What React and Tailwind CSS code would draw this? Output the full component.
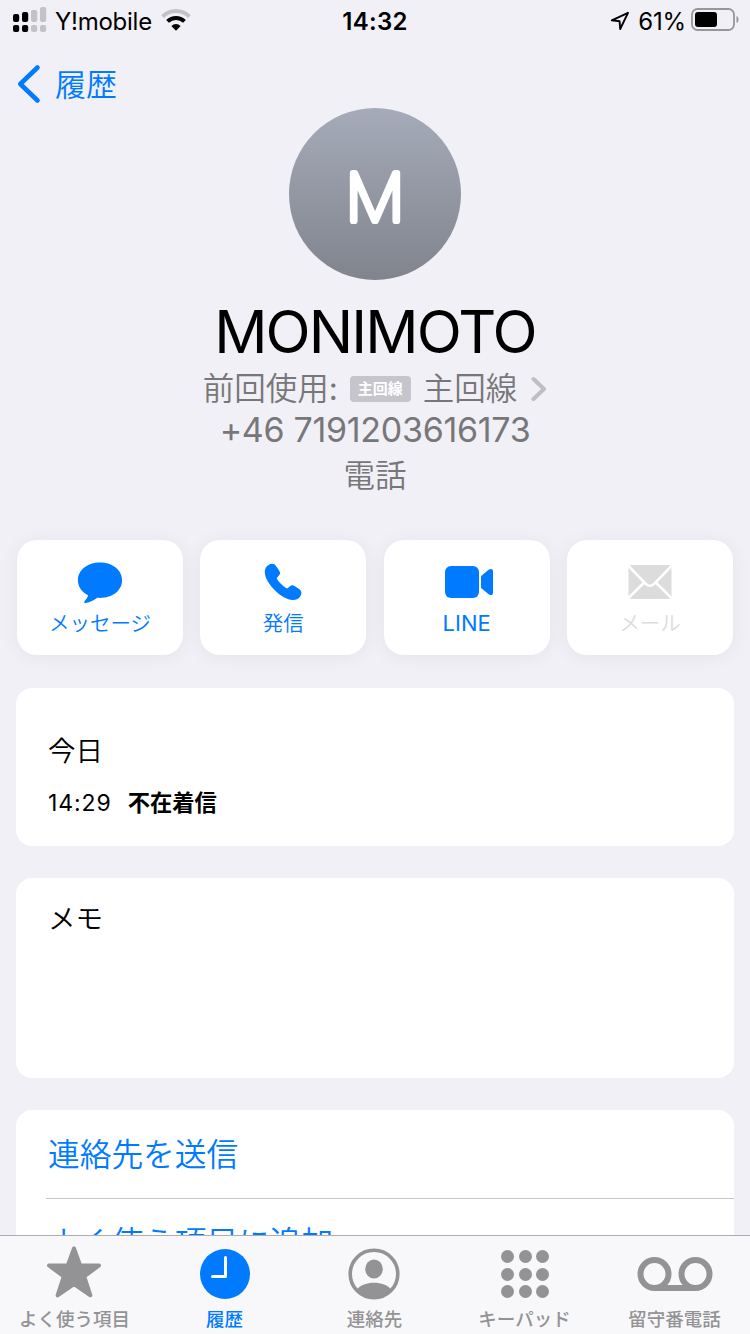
import React from 'react';


const BackChevron = () => (
  <svg width="24" height="40" viewBox="0 0 24 40" fill="none">
    <path d="M20.500 3.500 3.300 20l17.200 16.500" stroke="#007aff" strokeWidth="4.600" strokeLinecap="round" strokeLinejoin="round" />
  </svg>
);

const SignalIcon = () => (
  <svg width="34" height="26" viewBox="0 0 34 26">
    <g fill="#000">
      <rect x="0" y="7" width="6.2" height="8" rx="2" />
      <rect x="0" y="18" width="6.2" height="7" rx="2" />
      <rect x="9" y="5" width="6.2" height="10" rx="2" />
      <rect x="9" y="18" width="6.2" height="7" rx="2" />
    </g>
    <g fill="#c3c2c8">
      <rect x="18" y="3" width="6.2" height="12" rx="2" />
      <rect x="18" y="18" width="6.2" height="7" rx="2" />
      <rect x="27" y="0" width="6.2" height="15" rx="2" />
      <rect x="27" y="18" width="6.2" height="7" rx="2" />
    </g>
  </svg>
);

const WifiIcon = () => (
  <svg width="30" height="22" viewBox="0 0 30 22" fill="none">
    <path d="M1.600 7.600a19 19 0 0 1 26.800 0" stroke="#c3c2c8" strokeWidth="4" />
    <path d="M6.600 12.400a12 12 0 0 1 16.800 0" stroke="#000" strokeWidth="4" />
    <path d="M10.400 17a6.400 6.400 0 0 1 9.200 0L15 21.800Z" fill="#000" />
  </svg>
);

const LocationIcon = () => (
  <svg width="20" height="20" viewBox="0 0 20 20" fill="none">
    <path d="M18 1.800 1.800 9.300l7.800.9.600 7.800Z" stroke="#000" strokeWidth="1.900" strokeLinejoin="round" />
  </svg>
);

const BatteryIcon = () => (
  <svg width="49" height="24" viewBox="0 0 49 24">
    <rect x="1" y="1" width="42" height="21" rx="5.500" fill="none" stroke="#97969a" strokeWidth="1.800" />
    <rect x="4" y="4" width="22" height="15" rx="3" fill="#000" />
    <path d="M45.500 8v7c1.400-.6 2-1.900 2-3.500s-.6-2.900-2-3.500Z" fill="#97969a" />
  </svg>
);

const MessageIcon = () => (
  <svg width="46" height="42" viewBox="0 0 46 42" fill="#007aff">
    <path d="M23 .5C10.500.5.900 8.100.900 18.200c0 6.300 3.800 11.800 10.200 15-.6 2.300-2 4.100-3.600 6-.7.9-.1 1.900 1 1.800 4.800-.5 8.500-2.700 11.800-5.200.9.100 1.800.1 2.700.1 12.500 0 22.100-7.600 22.100-17.700S35.500.5 23 .5Z" />
  </svg>
);

const PhoneIcon = () => (
  <svg className="mb-px" width="38" height="38" viewBox="0 0 38 38" fill="#007aff">
    <path d="M4.200 2.200C7.100.100 10.200.400 12 2.900l3.100 4.500c1.400 2.100 1.200 3.600-.2 5.200l-1.700 1.800c-.5.6-.5 1.200-.1 1.900 1 1.600 2.400 3.200 4 4.800 1.600 1.600 3.200 3 4.900 4 .7.400 1.300.4 1.900-.1l1.800-1.600c1.600-1.400 3.100-1.600 5.200-.2l4.500 3.100c2.400 1.700 2.700 4.500.6 7.400-1.700 2.300-4.200 3.400-7.200 3.300-5.700-.2-12.300-4.100-18-9.800C5.100 21.500 1 14.900.8 9.200.7 6.200 1.900 3.800 4.200 2.200Z" />
  </svg>
);

const VideoIcon = () => (
  <svg className="mb-[2px] ml-[4px]" width="50" height="34" viewBox="0 0 50 34" fill="#007aff">
    <rect x="1" y="1" width="34" height="32" rx="6" />
    <path d="M37 12.500c0-1.100.4-1.900 1.300-2.600l6.700-5.300c1.900-1.400 4-.6 4 1.700v21.400c0 2.300-2.100 3.100-4 1.700l-6.700-5.300c-.9-.7-1.300-1.500-1.300-2.600Z" />
  </svg>
);

const MailIcon = () => (
  <svg className="mb-[2px]" width="44" height="34" viewBox="0 0 44 34">
    <rect x=".5" y="0" width="43" height="34" rx="3.500" fill="#dcdcdc" />
    <path d="m0 .5 17.800 18.300c2.600 2.600 5.800 2.600 8.400 0L44 .5M0 33.500l16-15.800M44 33.500 28 17.700" fill="none" stroke="#fff" strokeWidth="2.600" />
  </svg>
);

const StarIcon = () => (
  <svg className="mb-1 mr-[2px]" width="56" height="54" viewBox="0 0 56 54">
    <path d="m28 3.500 6.200 17H53L38.200 31.500l6.200 18.800L28 39 11.600 50.300 17.800 31.500 3 20.500h18.800Z" fill="#939395" stroke="#939395" strokeWidth="4" strokeLinejoin="round" />
  </svg>
);

const ClockIcon = () => (
  <svg width="50" height="50" viewBox="0 0 50 50">
    <circle cx="25" cy="25" r="25" fill="#007aff" />
    <path d="M25.500 8.500v19H12.500" fill="none" stroke="#fff" strokeWidth="3" strokeLinecap="round" strokeLinejoin="round" />
  </svg>
);

const ContactIcon = () => (
  <svg className="mr-[2px]" width="52" height="52" viewBox="0 0 52 52" fill="#939395">
    <circle cx="26" cy="26" r="23.800" fill="none" stroke="#939395" strokeWidth="3.600" />
    <ellipse cx="26" cy="21" rx="8.800" ry="9.600" />
    <path d="M9 41.500c3.500-4.500 9.800-6.700 17-6.700s13.500 2.200 17 6.700C38.500 47 32.500 50 26 50S13.500 47 9 41.500Z" />
  </svg>
);

const KeypadIcon = () => (
  <div className="grid grid-cols-3 gap-x-[4.500px] gap-y-[4.500px]">
    {Array.from({ length: 9 }, (_, i) => (
      <span key={i} className="size-[13px] rounded-full bg-[#939395]" />
    ))}
  </div>
);

const VoicemailIcon = () => (
  <svg width="76" height="36" viewBox="0 0 76 36" fill="none" stroke="#939395" strokeWidth="6">
    <circle cx="17.500" cy="18" r="14" />
    <circle cx="58.500" cy="18" r="14" />
    <path d="M17.500 32h41" />
  </svg>
);


const ACTIONS = [
  { label: 'メッセージ', icon: <MessageIcon />, color: 'text-[#007aff]' },
  { label: '発信', icon: <PhoneIcon />, color: 'text-[#007aff]' },
  { label: 'LINE', icon: <VideoIcon />, color: 'text-[#007aff]', latin: true },
  { label: 'メール', icon: <MailIcon />, color: 'text-[#dcdcdc]' },
];

const TABS = [
  { label: 'よく使う項目', icon: <StarIcon /> },
  { label: '履歴', icon: <ClockIcon />, active: true },
  { label: '連絡先', icon: <ContactIcon /> },
  { label: 'キーパッド', icon: <KeypadIcon /> },
  { label: '留守番電話', icon: <VoicemailIcon /> },
];


const StatusBar = () =>
{
  return (
    <header className="grid h-10 shrink-0 grid-cols-3 items-center pl-[13px] pr-[10px] text-[24px] text-black">
      <div className="flex items-center">
        <SignalIcon />
        <span className="ml-2 pt-[3px] tracking-[-0.25px]">Y!mobile</span>
        <span className="ml-[9px]"><WifiIcon /></span>
      </div>
      <div className="pr-[3px] pt-[3px] text-center font-semibold tracking-[0.3px]">14:32</div>
      <div className="flex items-center justify-end">
        <span className="pt-[2px]"><LocationIcon /></span>
        <span className="ml-2 mr-[5px] pt-[3px] tracking-[-0.2px]">61%</span>
        <BatteryIcon />
      </div>
    </header>
  );
};


const Profile = () =>
{
  return (
    <section className="flex flex-col items-center text-[#77777a]">
      <div className="size-[172px] overflow-hidden rounded-full bg-linear-to-b from-[#a5abb9] to-[#81848d]">
        <svg width="172" height="172" viewBox="0 0 172 172">
          <text x="86" y="113" textAnchor="middle" fontSize="66" fontWeight="100" fill="#fff" stroke="#fff" strokeWidth="6.200" strokeLinejoin="round">M</text>
        </svg>
      </div>
      <h1 className="mt-[22px] h-[60px] text-[59px] leading-[60px] tracking-[-1.900px] text-black">MONIMOTO</h1>
      <div className="flex h-[52px] items-center pt-px text-[31.500px] font-[350]">
        <span>前回使用<span className="font-normal">:</span></span>
        <span className="ml-3 flex h-[26px] w-[61px] items-center justify-center rounded-[4px] bg-[#c6c5cb] pt-px text-[15px] font-bold text-white">主回線</span>
        <span className="ml-[12px]">主回線</span>
        <svg className="ml-[14px]" width="16" height="26" viewBox="0 0 16 26" fill="none">
          <path d="m2.500 3 10.500 10L2.500 23" stroke="#bfbec4" strokeWidth="4" strokeLinecap="round" strokeLinejoin="round" />
        </svg>
      </div>
      <div className="h-8 text-[34px] leading-8 tracking-[-0.300px]">+46 7191203616173</div>
      <div className="h-[58px] text-[31.500px] font-[350] leading-[59px]">電話</div>
    </section>
  );
};


const ActionButton = ({ label, icon, color, latin }) =>
{
  return (
    <button className={`flex h-[115px] w-[166px] flex-col items-center rounded-[20px] bg-white pt-[22px] shadow-[0_2px_20px_rgba(0,0,0,0.055)] ${color}`}>
      <span className="flex h-[41px] items-center">{icon}</span>
      <span className={latin ? 'mt-[5px] text-[22px] leading-[30px]' : 'mt-[6px] text-[20.500px] font-[350] leading-[30px]'}>{label}</span>
    </button>
  );
};


const TabBar = () =>
{
  return (
    <nav className="grid h-[99px] shrink-0 grid-cols-5 border-t border-[#adadb0] bg-[#f8f8fa]">
      {TABS.map((tab) => (
        <div key={tab.label} className={`flex flex-col items-center pt-3 ${tab.active ? 'text-[#007aff]' : 'text-[#939395]'}`}>
          <span className="flex h-[52px] items-center">{tab.icon}</span>
          <span className="mr-px mt-[6px] whitespace-nowrap text-[18.500px] font-medium leading-[26px]">{tab.label}</span>
        </div>
      ))}
    </nav>
  );
};


const App = () =>
{
  return (
    <div className="flex h-[1334px] w-[750px] flex-col overflow-hidden bg-[#f1f0f6] font-['Inter','Noto_Sans_CJK_JP',sans-serif]" lang="ja">

      <main className="min-h-0 flex-1 overflow-hidden">

        <StatusBar />

        <div className="flex h-[68px] items-center pl-[17px] pt-[20px] text-[31px] font-[350] text-[#007aff]">
          <BackChevron />
          <span className="ml-[14px] pt-[2px]">履歴</span>
        </div>

        <Profile />

        <div className="mt-9 flex justify-between px-[17px]">
          {ACTIONS.map((action) => (
            <ActionButton key={action.label} {...action} />
          ))}
        </div>

        <section className="mx-4 mt-[33px] h-[158px] rounded-[16px] bg-white px-8 pt-[43px] text-black">
          <h2 className="text-[27.500px] font-[350] leading-10">今日</h2>
          <p className="mt-[11px] flex text-[23px] leading-[42px]">
            <span className="tracking-[0.900px]">14:29</span>
            <span className="ml-[16px] text-[22.300px] font-bold">不在着信</span>
          </p>
        </section>

        <section className="mx-4 mt-8 h-[200px] rounded-[16px] bg-white px-8 pt-[21px] text-[27.500px] font-[350] leading-10 text-black">
          メモ
        </section>

        <section className="mx-4 mt-8 rounded-t-[16px] bg-white pl-[30px] text-[31.700px] font-[350] text-[#007aff]">
          <div className="h-[89px] border-b border-[#c6c6c8] pl-[2px] leading-[90px]">連絡先を送信</div>
          <div className="h-[88px] pl-[2px] leading-[88px]">よく使う項目に追加</div>
        </section>

      </main>

      <TabBar />

    </div>
  );
};


export default App;
